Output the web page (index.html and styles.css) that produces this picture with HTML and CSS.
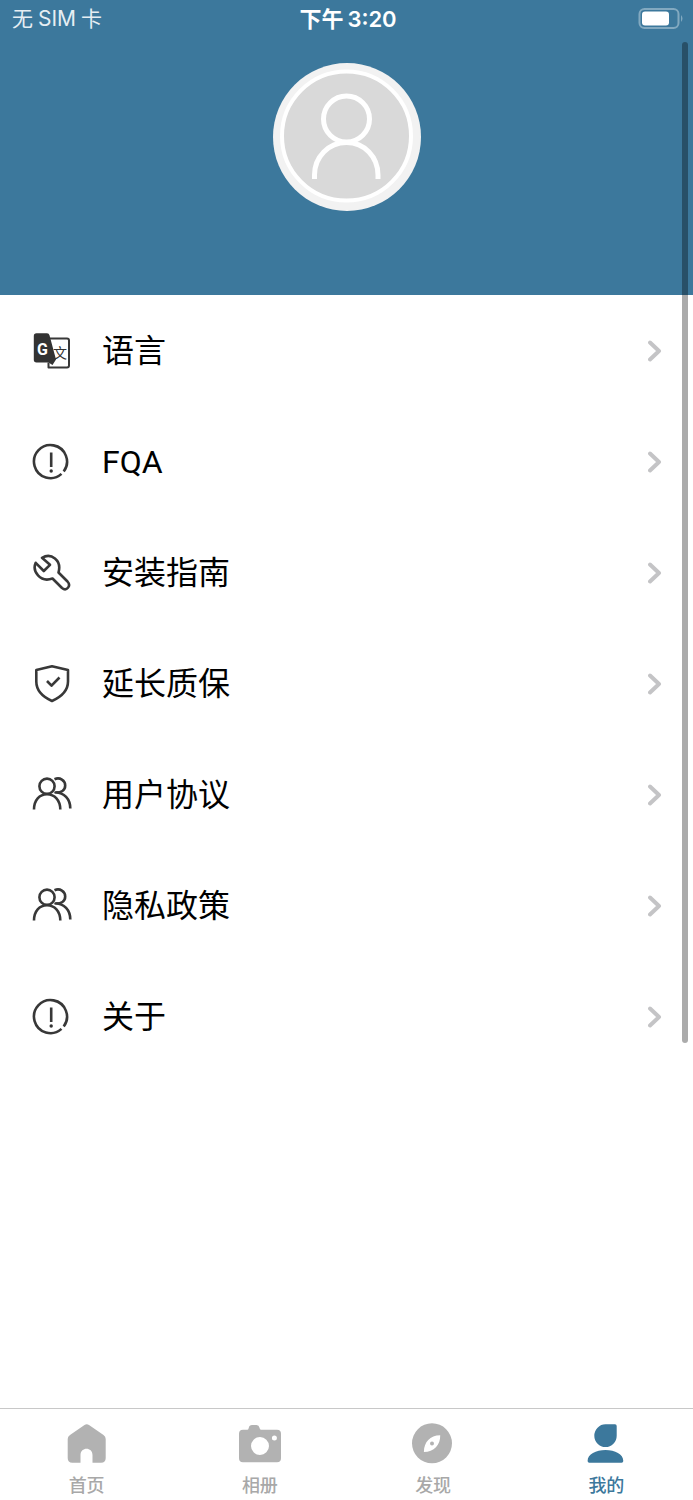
FILE: index.html
```html
<!DOCTYPE html>
<html lang="zh-CN">
<head>
<meta charset="utf-8">
<meta name="viewport" content="width=device-width, initial-scale=1">
<title>我的</title>
<link rel="stylesheet" href="styles.css">
</head>
<body>
<svg class="sprite" aria-hidden="true">
  <symbol id="chevron" viewBox="0 0 14 24"><path d="M2 3.500 11 12 2 20.500"/></symbol>
  <symbol id="alert" viewBox="0 0 40 40">
    <path d="M31.700 29.500A16.500 16.500 0 1 0 29.500 31.900M19.200 10.500v14.500"/><circle class="solid" cx="19.200" cy="29" r="1.700"/>
  </symbol>
  <symbol id="users" viewBox="0 0 40 40">
    <circle cx="15" cy="11.200" r="7.600"/>
    <path d="M2 34.500C2 25 7.500 19.200 15 19.200S28.300 25 28.300 34.500M22.500 4.200C28 1.800 33.200 5.500 33.200 10.500S29 17.800 23.500 17.500C32 17.500 38.300 24 38.300 33.500"/>
  </symbol>
</svg>
<div class="app">
  <header class="status">
    <div class="carrier"><span>无</span><span>SIM</span><span>卡</span></div>
    <div class="clock"><span>下午</span><span>3:20</span></div>
    <svg class="battery" viewBox="0 0 46 22" role="img" aria-label="电量">
      <rect class="battery-case" x="1.500" y="1" width="39" height="19" rx="5"/>
      <rect class="battery-level" x="4" y="3.500" width="27" height="14" rx="3"/>
      <path class="battery-tip" d="M43 7q3 3.500 0 7z"/>
    </svg>
  </header>
  <section class="profile">
    <button class="avatar" type="button" aria-label="头像">
      <svg viewBox="0 0 148 148">
        <circle class="avatar-rim" cx="74" cy="74" r="74"/>
        <circle class="avatar-disc" cx="73.500" cy="73" r="64.500"/>
        <circle class="avatar-line" cx="73.500" cy="56" r="23"/>
        <path class="avatar-line" d="M41.500 116v-4c0-18 14-32.500 32-32.500s31.500 14.500 31.500 32.500v4"/>
      </svg>
    </button>
  </section>
  <main class="content">
    <nav class="menu" aria-label="菜单">
      <a class="row" href="#language">
        <svg class="icon" viewBox="0 0 40 40">
          <path class="thin" d="M17 7.500h18q2 0 2 2v25q0 2-2 2H16.500v-5"/>
          <path class="solid" d="M4.500 2.200h10.500q2 0 2.500 2L24 28.500 20.500 34l-4-2.500h-12q-2.700 0-2.700-2.700V5q0-2.800 2.700-2.800z"/>
          <text class="glyph-g" x="5" y="24">G</text>
          <text class="glyph-wen" x="21" y="27">文</text>
        </svg>
        <span class="label">语言</span><svg class="chevron"><use href="#chevron"/></svg>
      </a>
      <a class="row" href="#fqa"><svg class="icon"><use href="#alert"/></svg><span class="label">FQA</span><svg class="chevron"><use href="#chevron"/></svg></a>
      <a class="row" href="#guide">
        <svg class="icon" viewBox="0 0 40 40"><path d="M10 4.800C19-.5 30 7 26.500 19.500L35.500 28.500C39.500 33 34.500 38.500 30 35L20.500 25.500C8 30 0 18 3.700 9.800L11.800 18 18 11.800z"/></svg>
        <span class="label">安装指南</span><svg class="chevron"><use href="#chevron"/></svg>
      </a>
      <a class="row" href="#warranty">
        <svg class="icon" viewBox="0 0 40 40"><path d="M20 2.200 36 6v11.500C36 26 30 32.500 20 37 10 32.500 4.300 26 4.300 17.500V6zM15 17l4.500 4.700 8-8.200"/></svg>
        <span class="label">延长质保</span><svg class="chevron"><use href="#chevron"/></svg>
      </a>
      <a class="row" href="#terms"><svg class="icon"><use href="#users"/></svg><span class="label">用户协议</span><svg class="chevron"><use href="#chevron"/></svg></a>
      <a class="row" href="#privacy"><svg class="icon"><use href="#users"/></svg><span class="label">隐私政策</span><svg class="chevron"><use href="#chevron"/></svg></a>
      <a class="row" href="#about"><svg class="icon"><use href="#alert"/></svg><span class="label">关于</span><svg class="chevron"><use href="#chevron"/></svg></a>
    </nav>
  </main>
  <nav class="tabs" aria-label="主导航">
    <a class="tab" href="#home">
      <svg viewBox="0 0 44 44"><path d="M19.500 3Q21.700 1.500 24 3L38.500 13Q40.700 14.500 40.700 17V36q0 4.700-4.700 4.700H27.500V33c0-8.500-12-8.500-12 0v7.700H7.400q-4.700 0-4.700-4.700V17Q2.700 14.500 5 13z"/></svg>
      <span>首页</span>
    </a>
    <a class="tab" href="#album">
      <svg viewBox="0 0 44 44"><path fill-rule="evenodd" d="M5 7.700h4.500q1 0 1.300-2Q11.300 3 14 3h4.500q2.500 0 3 2.700.3 2 1.500 2H39q4 0 4 4v24.600q0 4-4 4H5q-4 0-4-4V11.700q0-4 4-4zM22 15a9 9 0 1 0 0 18 9 9 0 0 0 0-18zM36.400 13.500a2.500 2.500 0 1 0 0 5 2.500 2.500 0 0 0 0-5z"/></svg>
      <span>相册</span>
    </a>
    <a class="tab" href="#discover">
      <svg viewBox="0 0 44 44"><path fill-rule="evenodd" d="M21 1.300a20 20 0 1 0 0 40 20 20 0 0 0 0-40zM29.200 13.300C29.500 23 23 30 12.900 30 13 20 19 13.500 29.200 13.300z"/><circle cx="21" cy="21.500" r="2"/></svg>
      <span>发现</span>
    </a>
    <a class="tab active" href="#mine" aria-current="page">
      <svg viewBox="0 0 44 44"><path d="M21.500 2.300H31q1.700 0 1.700 1.700v9.700a11.200 11.400 0 1 1-11.200-11.400zM21.500 28C31 28 39.300 32 39.300 39q0 1.700-1.700 1.700H5.300q-1.700 0-1.700-1.700C3.600 32 12 28 21.500 28z"/></svg>
      <span>我的</span>
    </a>
  </nav>
  <div class="scrollbar"></div>
</div>
</body>
</html>
```
FILE: styles.css
```css
* { box-sizing: border-box; }
body {
  margin: 0;
  background: #fff;
  color: #000;
  font-family: Inter, "Noto Sans CJK SC", sans-serif;
}
a { color: inherit; text-decoration: none; }
svg { display: block; flex: none; }
.sprite { position: absolute; width: 0; height: 0; }
.app {
  position: relative;
  display: flex;
  flex-direction: column;
  min-height: 100vh;
}
.status {
  display: grid;
  grid-template-columns: 1fr auto 1fr;
  align-items: center;
  height: 40px;
  padding: 0 9px 2px 12px;
  background: #3c789c;
  color: #fff;
  line-height: 24px;
}
.carrier, .clock { display: flex; }
.carrier { gap: 5px; font-size: 21px; color: #e6eef3; }
.clock { gap: 4px; font-size: 22px; font-weight: 600; }
.battery { justify-self: end; width: 46px; height: 22px; }
.battery-case { fill: none; stroke: #82a9c0; stroke-width: 2; }
.battery-level { fill: #fff; }
.battery-tip { fill: #82a9c0; }
.profile {
  display: flex;
  justify-content: center;
  padding: 23px 0 84px;
  background: #3c789c;
}
.avatar {
  width: 148px;
  height: 148px;
  padding: 0;
  border: 0;
  border-radius: 50%;
  background: none;
}
.avatar-rim { fill: #f2f2f2; }
.avatar-disc { fill: #d9d9d9; stroke: #fff; stroke-width: 4; }
.avatar-line { fill: none; stroke: #fff; stroke-width: 5; }
.content { flex: 1; }
.row {
  display: flex;
  align-items: center;
  gap: 30px;
  height: 111px;
  padding: 0 31px 0 32px;
}
.icon {
  width: 40px;
  height: 40px;
  fill: none;
  stroke: #383838;
  stroke-width: 2.6;
  stroke-linejoin: round;
}
.solid { fill: #333; stroke: none; }
.thin { stroke-width: 2; }
.glyph-g {
  fill: #fff;
  stroke: none;
  font-family: Roboto, sans-serif;
  font-size: 16px;
  font-weight: 700;
}
.glyph-wen { fill: #333; stroke: none; font-size: 14px; }
.label {
  flex: 1;
  font-family: Roboto, "Noto Sans CJK SC", sans-serif;
  font-size: 32px;
  line-height: 40px;
}
.chevron {
  width: 14px;
  height: 24px;
  fill: none;
  stroke: #c4c4c6;
  stroke-width: 4;
  stroke-linecap: round;
  stroke-linejoin: round;
}
.tabs {
  display: grid;
  grid-template-columns: repeat(4, 1fr);
  height: 92px;
  border-top: 1px solid #c8c8c8;
}
.tab {
  display: flex;
  flex-direction: column;
  align-items: center;
  gap: 8px;
  padding-top: 13px;
  color: #a8a8a8;
  font-size: 18px;
  font-weight: 500;
  line-height: 24px;
}
.tab svg { width: 44px; height: 44px; fill: #b2b2b2; }
.tab.active { color: #3c789c; }
.tab.active svg { fill: #3c789c; }
.scrollbar {
  position: absolute;
  top: 42px;
  right: 5px;
  width: 6px;
  height: 1001px;
  border-radius: 3px;
  background: rgba(0, 0, 0, 0.33);
}
```
